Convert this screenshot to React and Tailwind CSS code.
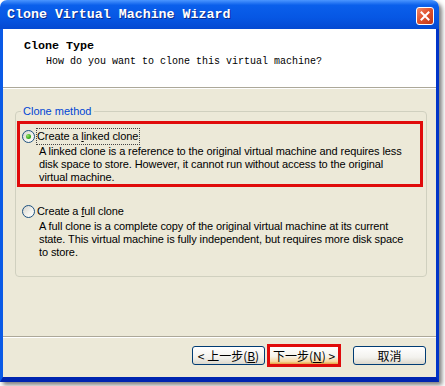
import { useState } from 'react'

function Radio({ checked }) {
    return (
        <span className="w-[13px] h-[13px] shrink-0 rounded-full border border-[#1C5180] bg-[linear-gradient(135deg,#D5D4CC_0%,#F4F3EE_60%,#FFFFFF_100%)] flex items-center justify-center">
            {checked && (
                <span className="w-[5px] h-[5px] rounded-full bg-[radial-gradient(circle_at_35%_35%,#9BE36B_0%,#3DB022_55%,#1F8A16_100%)]" />
            )}
        </span>
    )
}

function Option({ label, lines, checked, focused, highlight, onSelect }) {
    return (
        <div
            className={`border-[3px] pt-[4px] ${highlight ? 'border-[#E00B0B]' : 'border-transparent'}`}
            onClick={onSelect}
        >
            <div className="h-[17px] pl-[2px] flex items-center gap-[1px]">
                <Radio checked={checked} />
                <span
                    className={`h-[17px] leading-[15px] pr-[1px] border tracking-[-0.1px] ${focused ? 'border-dotted border-[#444]' : 'border-transparent'}`}
                >
                    {label}
                </span>
            </div>
            <div className="pl-[19px] leading-[13px] tracking-[-0.1px]">
                {lines.map((l) => (
                    <div key={l} className="whitespace-nowrap">{l}</div>
                ))}
            </div>
        </div>
    )
}

export default function App() {
    const [method, setMethod] = useState('linked')

    return (
        <div className="w-[445px] h-[386px] bg-white font-['Liberation_Sans',sans-serif] text-[11px] text-black">
            <div className="w-[439px] h-[382px] flex flex-col rounded-t-[7px] overflow-hidden shadow-[3px_3px_4px_rgba(0,0,0,0.5)]">
                {/* title bar */}
                <div className="h-[29px] shrink-0 flex items-center justify-between pl-[7px] pr-[5px] bg-[linear-gradient(180deg,#4B96FF_0%,#0A5FEB_18%,#0657E4_60%,#0449D2_100%)]">
                    <span className="font-['Liberation_Mono',monospace] font-bold text-[13.3px] text-white [text-shadow:1px_1px_#0B2A8A] whitespace-nowrap">
                        Clone Virtual Machine Wizard
                    </span>
                    <button className="w-[18px] h-[18px] mt-[2px] rounded-[3px] border border-white bg-[linear-gradient(135deg,#F08A6A_0%,#E0532F_45%,#C23515_100%)] flex items-center justify-center">
                        <svg width="10" height="10" viewBox="0 0 10 10">
                            <path d="M1.5 1.5 L8.5 8.5 M8.5 1.5 L1.5 8.5" stroke="white" strokeWidth="2" strokeLinecap="square" />
                        </svg>
                    </button>
                </div>

                {/* window body */}
                <div className="flex-1 flex flex-col bg-[#ECE9D8] border-l-[3px] border-r-[3px] border-b-[5px] border-l-[#0A5AE6] border-r-[#0034C8] border-b-[#0025B0]">
                    {/* header */}
                    <div className="h-[58px] shrink-0 bg-white pl-[21px] pt-[10px]">
                        <div className="font-['Liberation_Mono',monospace] font-bold text-[11.7px] leading-[14px]">Clone Type</div>
                        <div className="font-['Liberation_Mono',monospace] text-[10px] leading-[13px] mt-[2px] ml-[22px]">
                            How do you want to clone this virtual machine?
                        </div>
                    </div>
                    <div className="h-px bg-[#ACA899]" />
                    <div className="h-px bg-white" />

                    {/* content */}
                    <div className="flex-1 pt-[16px] pl-[12px] pr-[9px]">
                        <fieldset className="border border-[#D0D0BF] rounded-[4px] pb-[14px]">
                            <legend className="ml-[5px] px-[2px] text-[#0046D5] leading-[13px]">Clone method</legend>
                            <div className="ml-[1px] mr-[3px] mt-[3px]">
                                <Option
                                    label={<>Create a <span className="underline">l</span>inked clone</>}
                                    lines={[
                                        'A linked clone is a reference to the original virtual machine and requires less',
                                        'disk space to store. However, it cannot run without access to the original',
                                        'virtual machine.',
                                    ]}
                                    checked={method === 'linked'}
                                    focused
                                    highlight
                                    onSelect={() => setMethod('linked')}
                                />
                                <div className="mt-[9px]">
                                    <Option
                                        label={<>Create a <span className="underline">f</span>ull clone</>}
                                        lines={[
                                            'A full clone is a complete copy of the original virtual machine at its current',
                                            'state. This virtual machine is fully independent, but requires more disk space',
                                            'to store.',
                                        ]}
                                        checked={method === 'full'}
                                        onSelect={() => setMethod('full')}
                                    />
                                </div>
                            </div>
                        </fieldset>
                    </div>

                    {/* footer */}
                    <div className="h-px bg-[#ACA899]" />
                    <div className="h-px bg-white" />
                    <div className="h-[39px] shrink-0 flex items-center justify-end pr-[10px] pb-[4px] font-['Noto_Sans_CJK_SC',sans-serif] text-[12px]">
                        <button className="w-[73px] h-[19px] rounded-[3px] border border-[#003C74] bg-[linear-gradient(180deg,#FFFFFF_0%,#F3F2EE_60%,#DCD8CC_100%)] flex items-center justify-center whitespace-nowrap leading-none">
                            &lt; 上一步(<span className="underline">B</span>)
                        </button>
                        <div className="ml-[2px] w-[74px] h-[23px] border-[3px] border-[#E00B0B] bg-[linear-gradient(180deg,#FFFFFF_0%,#F6F3EA_55%,#F7D8A0_85%,#E8A040_100%)] flex items-center justify-center whitespace-nowrap leading-none">
                            下一步(<span className="underline">N</span>) &gt;
                        </div>
                        <button className="ml-[12px] w-[73px] h-[19px] rounded-[3px] border border-[#003C74] bg-[linear-gradient(180deg,#FFFFFF_0%,#F3F2EE_60%,#DCD8CC_100%)] flex items-center justify-center leading-none">
                            取消
                        </button>
                    </div>
                </div>
            </div>
        </div>
    )
}
